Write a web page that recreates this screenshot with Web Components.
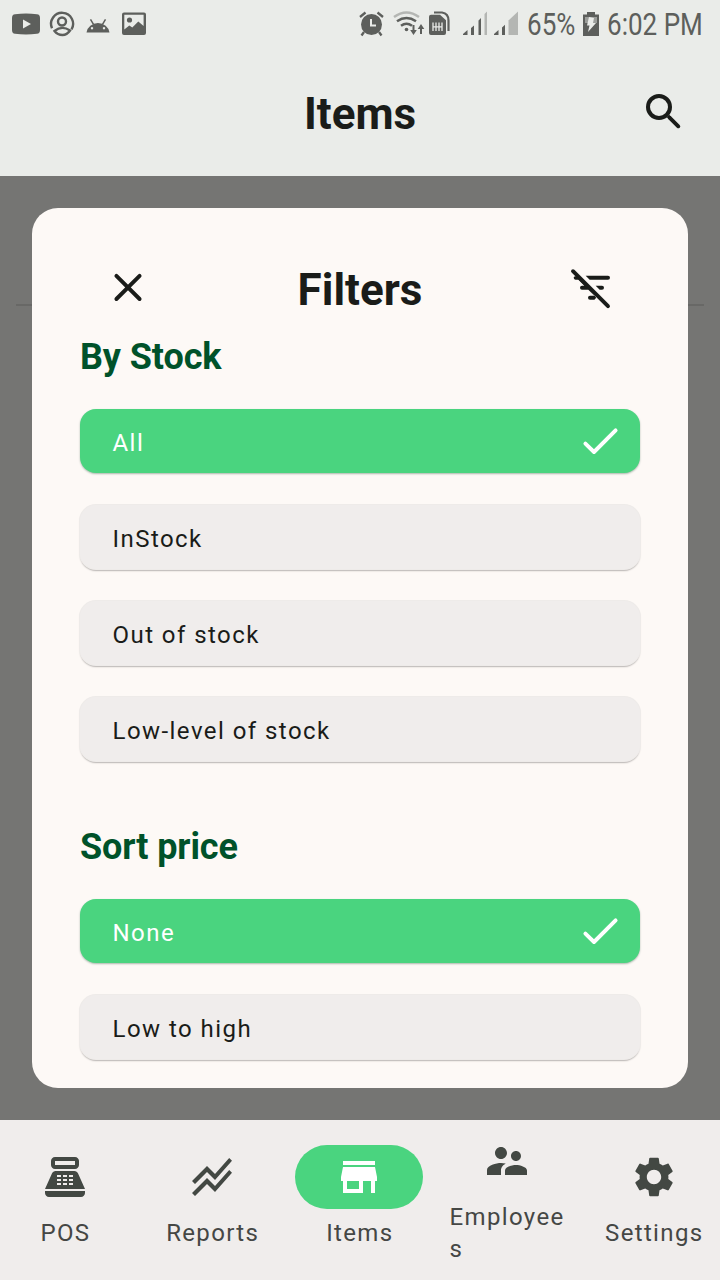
<!DOCTYPE html>
<html lang="en"><head><meta charset="utf-8"><title>Items</title>
<style>
body{margin:0;background:#757573;font-family:Roboto,"Liberation Sans",sans-serif;color:#1a1c19}
</style></head><body>
<items-screen></items-screen>
<script>
const line='fill="none" stroke="currentColor" stroke-width="1.95" stroke-linecap="round"';
const ICONS={
search:`<circle cx="9.5" cy="9.5" r="5.5" fill="none" stroke="currentColor" stroke-width="2"/><path d="M14 14l1 1" fill="none" stroke="currentColor" stroke-width="1.700"/><path ${line} d="M14.900 14.900l4.250 4.250"/>`,
close:`<path ${line} d="M6.200 5.900l11.600 11.600M17.800 5.900l-11.600 11.600"/>`,
filterOff:`<path ${line} d="M2.500 3.600l17.500 17.500"/><path d="M10.830 8H20a1 1 0 0 0 0-2H8.830zM15.830 13H17a1 1 0 0 0 0-2h-3.170zM14 16.830c0 .6-.4 1.170-1 1.170h-2a1 1 0 0 1 0-2h2.170l-3-3H7a1 1 0 0 1 0-2h1.170l-3-3H4a1 1 0 0 1-1-1.500l1.500-.5z" transform="translate(0 -.15)"/>`,
check:`<path ${line} stroke-linejoin="round" d="M4.700 13.300L9 17.500 19.800 6.700"/>`,
pos:'<path fill-rule="evenodd" d="M17 2H7c-1.1 0-2 .9-2 2v2c0 1.1.9 2 2 2h10c1.1 0 2-.9 2-2V4c0-1.1-.9-2-2-2zm0 4H7V4h10v2zm3 16H4c-1.1 0-2-.9-2-2v-1h20v1c0 1.1-.9 2-2 2zM18.53 10.19C18.21 9.47 17.49 9 16.7 9H7.3c-.79 0-1.51.47-1.83 1.19L2 18h20zM8 11h2v1H8zm3 0h2v1h-2zm3 0h2v1h-2zM8 13h2v1H8zm3 0h2v1h-2zm3 0h2v1h-2zM8 15h2v1H8zm3 0h2v1h-2zm3 0h2v1h-2z"/>',
reports:'<path d="M2 19.99l7.5-7.51 4 4 7.09-7.97L22 9.92l-8.5 9.56-4-4-6 6.01-1.5-1.5zm1.5-4.5l6-6.01 4 4L22 3.92l-1.41-1.41-7.09 7.97-4-4L2 13.99l1.5 1.5z"/>',
store:'<path d="M20 4H4v2h16V4zm1 10v-2l-1-5H4l-1 5v2h1v6h10v-6h4v6h2v-6h1zm-9 4H6v-4h6v4z"/>',
people:'<path d="M16.5 12c1.38 0 2.49-1.12 2.49-2.5S17.88 7 16.5 7 14 8.12 14 9.5s1.12 2.5 2.5 2.5zM9 11c1.66 0 2.99-1.34 2.99-3S10.66 5 9 5 6 6.34 6 8s1.34 3 3 3zm7.5 3c-1.83 0-5.5.92-5.5 2.75V19h11v-2.25c0-1.83-3.67-2.75-5.5-2.75zM9 13c-2.33 0-7 1.17-7 3.5V19h7v-2.25c0-.85.33-2.34 2.37-3.47C10.5 13.1 9.66 13 9 13z"/>',
settings:'<path d="M19.14 12.94c.04-.3.06-.61.06-.94 0-.32-.02-.64-.07-.94l2.03-1.58c.18-.14.23-.41.12-.61l-1.92-3.32c-.12-.22-.37-.29-.59-.22l-2.39.96c-.5-.38-1.03-.7-1.62-.94L14.4 2.81c-.04-.24-.24-.41-.48-.41h-3.84c-.24 0-.43.17-.47.41l-.36 2.54c-.59.24-1.13.57-1.62.94l-2.39-.96c-.22-.08-.47 0-.59.22L2.74 8.87c-.12.21-.08.47.12.61l2.03 1.58c-.05.3-.09.63-.09.94s.02.64.07.94l-2.03 1.58c-.18.14-.23.41-.12.61l1.92 3.32c.12.22.37.29.59.22l2.39-.96c.5.38 1.03.7 1.62.94l.36 2.54c.05.24.24.41.48.41h3.84c.24 0 .44-.17.47-.41l.36-2.54c.59-.24 1.13-.56 1.62-.94l2.39.96c.22.08.47 0 .59-.22l1.92-3.32c.12-.22.07-.47-.12-.61l-2.01-1.58zM12 15.6c-1.98 0-3.6-1.62-3.6-3.6s1.62-3.6 3.6-3.6 3.6 1.62 3.6 3.6-1.62 3.6-3.6 3.6z"/>'
};
function define(name,render){
  customElements.define(name,class extends HTMLElement{
    connectedCallback(){
      if(this.shadowRoot)return;
      const t=document.createElement('template');
      t.innerHTML=render(this);
      this.attachShadow({mode:'open'}).append(t.content.cloneNode(true));
    }
  });
}
define('md-icon',el=>`<style>:host{display:block;width:48px;height:48px;flex:none}svg{display:block;fill:currentColor}</style>
<svg width="48" height="48" viewBox="0 0 24 24">${ICONS[el.getAttribute('name')]}</svg>`);

define('status-bar',()=>`<style>
:host{display:flex;height:48px;color:#5d5f5c;justify-content:space-between}
svg{display:block;flex:none}
.right{display:flex}
.pct,.time{font-size:31px;line-height:50px;white-space:nowrap}
.pct{width:47px;margin-left:7px}.time{width:97px;margin-right:16px}
span{display:block;width:max-content;transform:scaleX(.84);transform-origin:0 50%}
</style>
<svg width="160" height="48" viewBox="0 0 160 48" fill="currentColor">
<path fill-rule="evenodd" d="M15 14.2Q26 13 37 14.2Q40 14.5 40 18V30Q40 33.5 37 33.8Q26 35 15 33.8Q12 33.5 12 30V18Q12 14.5 15 14.2zM23 19.5V28.5L31 24z"/>
<g fill="none" stroke="currentColor" stroke-width="2.4"><path d="M52 28.200A11 11 0 1 1 71.500 29.500"/><circle cx="62" cy="21.500" r="4"/><path d="M54.500 31q7.500-6 15.500-.5-3 4.500-7.500 4.500-5 0-8-4z"/></g>
<path fill-rule="evenodd" d="M86.500 32.500a11.600 10.800 0 0 1 23 0zM92 27a1.200 1.200 0 1 0 .01 0zM104 27a1.200 1.200 0 1 0 .01 0z"/><path d="M90.500 19.300l3 5M105.500 19.300l-3 5" stroke="currentColor" stroke-width="1.500"/>
<path fill-rule="evenodd" d="M124 12.500h20q2 0 2 2V33q0 2-2 2h-20q-2 0-2-2V14.500q0-2 2-2zM124.300 14.700V29.500l5-4 3 2 6-6 5.300 4.500V14.700z"/><circle cx="129.500" cy="20" r="2.600"/>
</svg>
<div class="right">
<svg width="162" height="48" viewBox="358 0 162 48" fill="currentColor">
<circle cx="371.500" cy="24.500" r="10.500"/><g fill="none" stroke="currentColor" stroke-width="2.300"><path d="M360 17l5.500-4.500M383 17l-5.500-4.500M364 32l-2.500 3.500M379 32l2.500 3.500"/><path d="M371 19v6.500h5" stroke="#eaece9" stroke-width="2"/></g>
<g fill="none" stroke="currentColor" stroke-width="2.500"><path d="M394 17q12.500-9 25 0" stroke="#b4b6b3"/><path d="M397 21.300q9.500-6.500 19 0M401 25.800q5.500-4 11 0"/><path d="M413.500 25v7M421 34v-6.500" stroke-width="2"/></g><circle cx="406.500" cy="29.500" r="1.800"/><path d="M410.200 30h6.600l-3.300 5zM417.700 29h6.600l-3.300-5z"/>
<path d="M434 12.500h8q6.500 1 6.500 8v10.500" fill="none" stroke="currentColor" stroke-width="2.200"/><path d="M431 14.700h9l6 5.500V33q0 2-2 2h-13q-2 0-2-2V16.700q0-2 2-2z"/><g fill="none" stroke="#eaece9" stroke-width="1.300"><path d="M433 22.500v8.500M442 22.500v8.500M436 22.500v8.500M439 22.500v8.500M433 26.800h9"/></g>
<path d="M463 35v-1l4.500-4v5zM471 35v-7l3-2.500V35zM478.500 35V20.500l2.500-2.500v17z"/><path d="M484.500 35V14l2.500-2.500V35z" fill="#b4b6b3"/>
<path d="M494 35v-1l4.500-4v5zM502 35v-7.500l3-2.700V35z"/><path d="M508.500 35V20.500l9.500-9V35z" fill="#b4b6b3"/>
</svg>
<div class="pct"><span>65%</span></div>
<svg width="33" height="48" viewBox="574 0 33 48"><path fill="currentColor" d="M583 14.500h4V12h8v2.500h4V36h-16z"/><path d="M585 17h12v6h-12z" fill="#9b9d9a"/><path d="M589 17l5 1-1 5h3l-8 9 1.500-6.500H587z" fill="#eaece9"/></svg>
<div class="time"><span>6:02 PM</span></div>
</div>`);

define('app-bar',()=>`<style>
:host{display:grid;grid-template-columns:80px 1fr 80px;height:128px;align-items:center}
h1{margin:0;text-align:center;font-size:44px;line-height:56px;font-weight:700;padding-top:4px}
</style><i></i><h1><slot></slot></h1><md-icon name="search"></md-icon>`);

define('filter-option',el=>`<style>
:host{display:flex;height:64px;border-radius:16px;box-sizing:border-box;padding:0 16px 0 32.500px;align-items:center;justify-content:space-between;background:#f0edec;font-size:24px;letter-spacing:1.450px;box-shadow:0 0 0 1px #eeebe9,0 1.500px 1.500px #b9b5b3}
:host([selected]){background:#4ad47f;color:#fff;box-shadow:0 1px 2px #aab7ac}
span{padding-top:3px}</style><span><slot></slot></span>${el.hasAttribute('selected')?'<md-icon name="check"></md-icon>':''}`);

define('filter-group',el=>`<style>
:host{display:block}
h3{margin:0 0 28px;padding-top:1px;font-size:36px;line-height:48px;font-weight:700;letter-spacing:-.1px;color:#00522a}
div{display:flex;flex-direction:column;gap:32px}
</style><h3>${el.getAttribute('heading')}</h3><div><slot></slot></div>`);

define('filter-dialog',()=>`<style>
:host{display:flex;flex-direction:column;height:880px;margin:0 32px;padding:48px 48px 0;box-sizing:border-box;border-radius:26px;background:#fdf9f6;overflow:hidden}
header{display:grid;grid-template-columns:96px 1fr 96px;align-items:center;justify-items:center;height:64px;margin-bottom:12px;flex:none}
h2{margin:0;font-size:44px;line-height:56px;font-weight:700;padding-top:3px}
.body{display:flex;flex-direction:column;gap:61px}
</style><header><md-icon name="close"></md-icon><h2>Filters</h2><md-icon name="filterOff"></md-icon></header><div class="body"><slot></slot></div>`);

define('nav-item',el=>`<style>
:host{display:flex;flex-direction:column;align-items:center;justify-content:center;color:#434843;min-width:0}
.pill{width:128px;height:64px;border-radius:32px;display:grid;place-items:center;flex:none}
:host([active]) .pill{background:#4ad47f;color:#fff}
.label{font-size:24px;line-height:32px;letter-spacing:1.350px;margin-top:8px;padding-left:1px;color:#454745;max-width:115px;overflow-wrap:anywhere}
</style><div class="pill"><md-icon name="${el.getAttribute('icon')}"></md-icon></div><div class="label"><slot></slot></div>`);

define('bottom-nav',()=>`<style>
:host{display:grid;grid-template-columns:repeat(5,130px);gap:17.200px;height:160px;background:#f0edec;padding-bottom:6px;box-sizing:border-box}
</style><slot></slot>`);

define('items-screen',()=>`<style>
:host{display:flex;flex-direction:column;width:720px;height:1280px;overflow:hidden}
.top{height:176px;background:#eaece9;flex:none}
main{height:944px;box-sizing:border-box;padding-top:32px;background:linear-gradient(#686866,#686866) 16px 128px/688px 2px no-repeat #757573}
</style>
<div class="top"><status-bar></status-bar><app-bar>Items</app-bar></div>
<main><filter-dialog>
<filter-group heading="By Stock"><filter-option selected>All</filter-option><filter-option>InStock</filter-option><filter-option>Out of stock</filter-option><filter-option>Low-level of stock</filter-option></filter-group>
<filter-group heading="Sort price"><filter-option selected>None</filter-option><filter-option>Low to high</filter-option></filter-group>
</filter-dialog></main>
<bottom-nav><nav-item icon="pos">POS</nav-item><nav-item icon="reports">Reports</nav-item><nav-item icon="store" active>Items</nav-item><nav-item icon="people">Employees</nav-item><nav-item icon="settings">Settings</nav-item></bottom-nav>`);
</script>
</body></html>
